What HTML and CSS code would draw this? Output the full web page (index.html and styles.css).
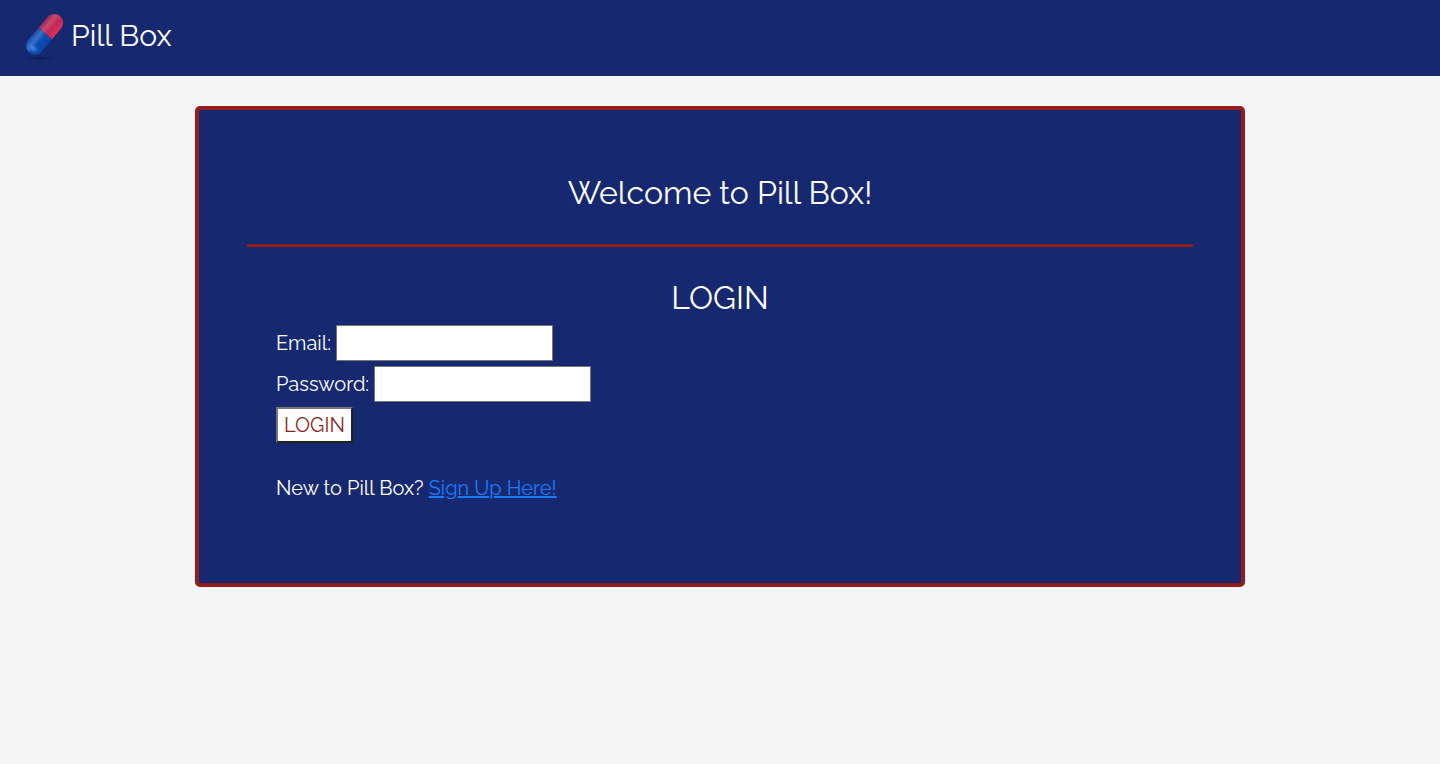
FILE: index.html
```html
<!DOCTYPE html>
<html lang="en">
<head>
<meta charset="utf-8">
<title>Pill Box</title>
<link rel="stylesheet" href="styles.css">
</head>
<body>
<header class="navbar">
  <svg class="logo" viewBox="0 0 50 60" aria-hidden="true">
    <defs>
      <linearGradient id="red" x1="0" y1="0" x2="1" y2="0">
        <stop offset="0" stop-color="#8f2a60"/>
        <stop offset=".3" stop-color="#c8486a"/>
        <stop offset=".6" stop-color="#c02a52"/>
        <stop offset="1" stop-color="#e0305c"/>
      </linearGradient>
      <linearGradient id="blue" x1="0" y1="0" x2="1" y2="0">
        <stop offset="0" stop-color="#1b49a8"/>
        <stop offset=".3" stop-color="#3672c8"/>
        <stop offset=".55" stop-color="#0c4db4"/>
        <stop offset="1" stop-color="#0d46a8"/>
      </linearGradient>
      <radialGradient id="shadow">
        <stop offset="0" stop-color="#0a1440" stop-opacity=".7"/>
        <stop offset="1" stop-color="#0a1440" stop-opacity="0"/>
      </radialGradient>
      <radialGradient id="glow">
        <stop offset="0" stop-color="#4fa0f0" stop-opacity=".7"/>
        <stop offset="1" stop-color="#4fa0f0" stop-opacity="0"/>
      </radialGradient>
    </defs>
    <ellipse cx="20" cy="53.500" rx="17" ry="2.500" fill="url(#shadow)"/>
    <g transform="translate(24.600 29.300) rotate(40)">
      <path d="M-8.900 -1V-15a8.900 8.900 0 0 1 17.800 0V-1z" fill="url(#red)"/>
      <path d="M-8.900 -1V15a8.900 8.900 0 0 0 17.800 0V-1z" fill="url(#blue)"/>
      <ellipse cx="0" cy="18" rx="6" ry="4" fill="url(#glow)"/>
    </g>
  </svg>
  <span class="brand">Pill Box</span>
</header>
<main class="card">
  <h1 class="title">Welcome to Pill Box!</h1>
  <hr class="rule">
  <form class="login">
    <h2 class="title">LOGIN</h2>
    <div class="row">
      <label for="email">Email:</label>
      <input class="field" id="email" type="email">
    </div>
    <div class="row">
      <label for="password">Password:</label>
      <input class="field" id="password" type="password">
    </div>
    <button class="submit" type="submit">LOGIN</button>
    <p class="signup">New to Pill Box? <a class="link" href="#signup">Sign Up Here!</a></p>
  </form>
</main>
</body>
</html>
```
FILE: styles.css
```css
* {
  box-sizing: border-box;
}

body {
  margin: 0;
  background: #f5f5f5;
  color: #fff;
  font-family: Raleway, Lato, sans-serif;
  font-size: 20px;
  line-height: 30px;
}

.navbar {
  display: flex;
  align-items: center;
  padding: 5px 20px 11px;
  background: #162970;
}

.logo {
  width: 50px;
  height: 60px;
}

.brand {
  padding: 2px 0 0 1px;
  font-size: 30px;
}

.card {
  max-width: 1050px;
  margin: 30px auto;
  padding: 64px 48px;
  border: 4px solid #931d1d;
  border-radius: 5px;
  background: #162970;
}

.title {
  margin: 0;
  font-size: 32px;
  font-weight: 400;
  line-height: 38px;
  text-align: center;
}

.rule {
  margin: 32px 0;
  border: 0;
  border-top: 3px solid #931d1d;
}

.login {
  display: flex;
  flex-direction: column;
  gap: 5px;
  padding: 0 29px;
}

.login .title {
  margin-bottom: 3px;
}

.row {
  display: flex;
  align-items: center;
  gap: 5px;
}

.field {
  width: 217px;
  height: 36px;
  border: 1px solid #767676;
  border-radius: 1px;
  background: #fff;
  font: inherit;
}

.submit {
  align-self: flex-start;
  height: 36px;
  padding: 0 6px;
  border: 2px solid;
  border-color: #767676 #212121 #212121 #767676;
  background: #fff;
  color: #931d1d;
  font: inherit;
}

.signup {
  margin: 25px 0 16px;
}

.link {
  color: #1a7bff;
  text-underline-offset: 1px;
  text-decoration-thickness: 2px;
}
```
